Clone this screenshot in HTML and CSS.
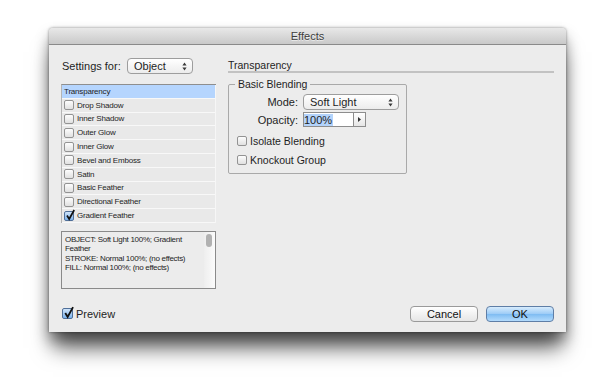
FILE: index.html
```html
<!DOCTYPE html>
<html lang="en">
<head>
  <meta charset="UTF-8">
  <title>Effects</title>
  <link rel="stylesheet" href="styles.css">
</head>
<body>

  <div class="window">
    <div class="titlebar">Effects</div>

    <div class="content">
      <div class="left">
        <div class="settings">
          <span class="settings-label">Settings for:</span>
          <span class="select select-object">Object
            <svg class="updown" width="5" height="9" viewBox="0 0 5 9"><path d="M2.5 0.5 L4.6 3.5 H0.4Z M2.5 8.5 L4.6 5.5 H0.4Z" fill="#3a3a3a"/></svg>
          </span>
        </div>

        <ul class="effects-list">
          <li class="selected">Transparency</li>
          <li><span class="check"></span>Drop Shadow</li>
          <li><span class="check"></span>Inner Shadow</li>
          <li><span class="check"></span>Outer Glow</li>
          <li><span class="check"></span>Inner Glow</li>
          <li><span class="check"></span>Bevel and Emboss</li>
          <li><span class="check"></span>Satin</li>
          <li><span class="check"></span>Basic Feather</li>
          <li><span class="check"></span>Directional Feather</li>
          <li>
            <span class="check checked">
              <svg class="tick" width="10" height="12" viewBox="0 0 10 12"><path d="M2 6.5 L4.2 10 L9.2 1" stroke="#111" stroke-width="1.7" fill="none"/></svg>
            </span>Gradient Feather
          </li>
        </ul>

        <div class="summary">
          <p class="summary-text">OBJECT: Soft Light 100%; Gradient Feather<br>STROKE: Normal 100%; (no effects)<br>FILL: Normal 100%; (no effects)</p>
          <div class="scroll"><span class="thumb"></span></div>
        </div>
      </div>

      <div class="right">
        <h3 class="heading">Transparency</h3>

        <fieldset class="group">
          <legend>Basic Blending</legend>
          <div class="fields">
            <label>Mode:</label>
            <span class="select select-mode">Soft Light
              <svg class="updown" width="5" height="9" viewBox="0 0 5 9"><path d="M2.5 0.5 L4.6 3.5 H0.4Z M2.5 8.5 L4.6 5.5 H0.4Z" fill="#3a3a3a"/></svg>
            </span>

            <label>Opacity:</label>
            <span class="opacity">
              <span class="value"><span class="sel">100%</span></span>
              <span class="stepper">
                <svg width="3" height="5" viewBox="0 0 3 5"><path d="M0 0 L3 2.5 L0 5Z" fill="#333"/></svg>
              </span>
            </span>
          </div>

          <div class="option first"><span class="check"></span>Isolate Blending</div>
          <div class="option"><span class="check"></span>Knockout Group</div>
        </fieldset>
      </div>
    </div>

    <div class="footer">
      <div class="preview">
        <span class="check checked big">
          <svg class="tick" width="11" height="13" viewBox="0 0 10 12"><path d="M2 6.5 L4.2 10 L9.2 1" stroke="#111" stroke-width="1.7" fill="none"/></svg>
        </span>Preview
      </div>
      <div class="buttons">
        <button class="btn">Cancel</button>
        <button class="btn btn-ok">OK</button>
      </div>
    </div>
  </div>

</body>
</html>
```

FILE: styles.css
```css
* {
  box-sizing: border-box;
}
body {
  margin: 0;
  min-height: 377px;
  padding: 28px 0 0 49px;
  background-color: #ffffff;
  font-family: "Liberation Sans", Arial, sans-serif;
  font-size: 10.5px;
  color: #1e1e1e;
}
.window {
  width: 517px;
  background-color: #ececec;
  border-radius: 4px 4px 0 0;
  box-shadow: 0 20px 20px -4px rgba(0, 0, 0, 0.6), 0 8px 14px rgba(0, 0, 0, 0.35), 0 0 3px rgba(0, 0, 0, 0.45);
}
.titlebar {
  height: 17px;
  line-height: 16px;
  text-align: center;
  font-size: 11px;
  color: #3c3c3c;
  text-shadow: 0 1px 0 rgba(255, 255, 255, 0.6);
  background: linear-gradient(#e8e8e8, #c9c9c9);
  border-bottom: 1px solid #8a8a8a;
  border-radius: 4px 4px 0 0;
}
.content {
  display: flex;
  gap: 12px;
  padding: 13px 12px 0;
}
.left {
  width: 155px;
  flex: none;
}
.right {
  flex: 1;
}
.settings {
  display: flex;
  align-items: center;
  height: 16px;
  padding-left: 1px;
}
.settings-label {
  width: 65px;
  font-size: 11px;
}
.select {
  display: flex;
  align-items: center;
  justify-content: space-between;
  height: 16px;
  padding: 0 5px 0 6px;
  border: 1px solid #9d9d9d;
  border-radius: 4px;
  background: linear-gradient(#ffffff, #ececec);
  font-size: 11px;
}
.select-object {
  width: 66px;
}
.select-mode {
  width: 96px;
}
.effects-list {
  list-style: none;
  margin: 10px 0 0;
  padding: 0;
  border-top: 1px solid #8e8e8e;
  border-left: 1px solid #b4b4b4;
  background-color: #f6f6f6;
}
.effects-list li {
  display: flex;
  align-items: center;
  height: 13.8px;
  margin-right: 1px;
  padding-left: 2px;
  border-bottom: 1.5px solid #f8f8f8;
  background-color: #e9e9e9;
  font-size: 8px;
  letter-spacing: -0.2px;
}
.effects-list li.selected {
  background-color: #b5d5fe;
}
.check {
  position: relative;
  flex: none;
  width: 10px;
  height: 10px;
  margin-right: 3px;
  border: 1px solid #939393;
  border-radius: 2px;
  background: linear-gradient(#fdfdfd, #e0e0e0);
}
.check.checked {
  border-color: #4f6f99;
  background: linear-gradient(#cfe4fa, #7cb3ee);
}
.check.big {
  width: 11px;
  height: 11px;
}
.tick {
  position: absolute;
  left: 0;
  top: -3px;
}
.summary {
  display: flex;
  height: 58px;
  margin-top: 8px;
  border: 1px solid #8a8a8a;
  background-color: #ececec;
}
.summary-text {
  flex: 1;
  margin: 0;
  padding: 3px 2px 0 3px;
  font-size: 8px;
  line-height: 9.3px;
  letter-spacing: -0.3px;
}
.scroll {
  width: 11px;
  padding: 2px 0 0 2px;
  background: linear-gradient(to right, #eeeeee, #fbfbfb);
}
.thumb {
  display: block;
  width: 6px;
  height: 13px;
  border-radius: 3px;
  background-color: #b1b1b1;
}
.heading {
  margin: 0;
  padding-top: 1px;
  line-height: 12px;
  font-size: 10.5px;
  font-weight: normal;
  border-bottom: 2px solid #c2c2c2;
}
.group {
  width: 179px;
  margin: 6px 0 0;
  padding: 0 0 4px;
  border: 1px solid #a9a9a9;
  border-radius: 2px;
}
.group legend {
  margin-left: 6px;
  padding: 0 3px;
  line-height: 11px;
  font-size: 10.5px;
}
.fields {
  display: grid;
  grid-template-columns: 69px auto;
  column-gap: 5px;
  row-gap: 2px;
  align-items: center;
  justify-content: start;
  margin-top: 4px;
}
.fields label {
  text-align: right;
  font-size: 11px;
}
.opacity {
  display: flex;
  height: 15px;
}
.value {
  width: 51px;
  padding: 1px 0 0;
  border: 1px solid #8d8d8d;
  background-color: #ffffff;
  font-size: 11px;
}
.value .sel {
  display: inline-block;
  height: 12px;
  line-height: 12px;
  padding-right: 1px;
  background-color: #b3d3fb;
}
.stepper {
  display: flex;
  align-items: center;
  justify-content: center;
  width: 12px;
  border: 1px solid #8d8d8d;
  border-left: none;
  background: linear-gradient(#ffffff, #e6e6e6);
}
.option {
  display: flex;
  align-items: center;
  height: 19px;
  padding-left: 8px;
  font-size: 10.5px;
}
.option.first {
  margin-top: 4px;
}
.footer {
  display: flex;
  justify-content: space-between;
  align-items: center;
  padding: 17px 12px 10px 13px;
}
.preview {
  display: flex;
  align-items: center;
  height: 16px;
  font-size: 11px;
}
.buttons {
  display: flex;
  gap: 8px;
}
.btn {
  width: 68px;
  height: 16px;
  padding: 0;
  border: 1px solid #9a9a9a;
  border-radius: 4px;
  background: linear-gradient(#ffffff, #f2f2f2 50%, #e6e6e6);
  font-family: inherit;
  font-size: 11px;
  line-height: 14px;
  color: #111;
}
.btn-ok {
  border-color: #5f7ea6;
  background: linear-gradient(#d7ecfd, #9ccbf6 50%, #7fbcf2 52%, #b3dbfc);
}
```
